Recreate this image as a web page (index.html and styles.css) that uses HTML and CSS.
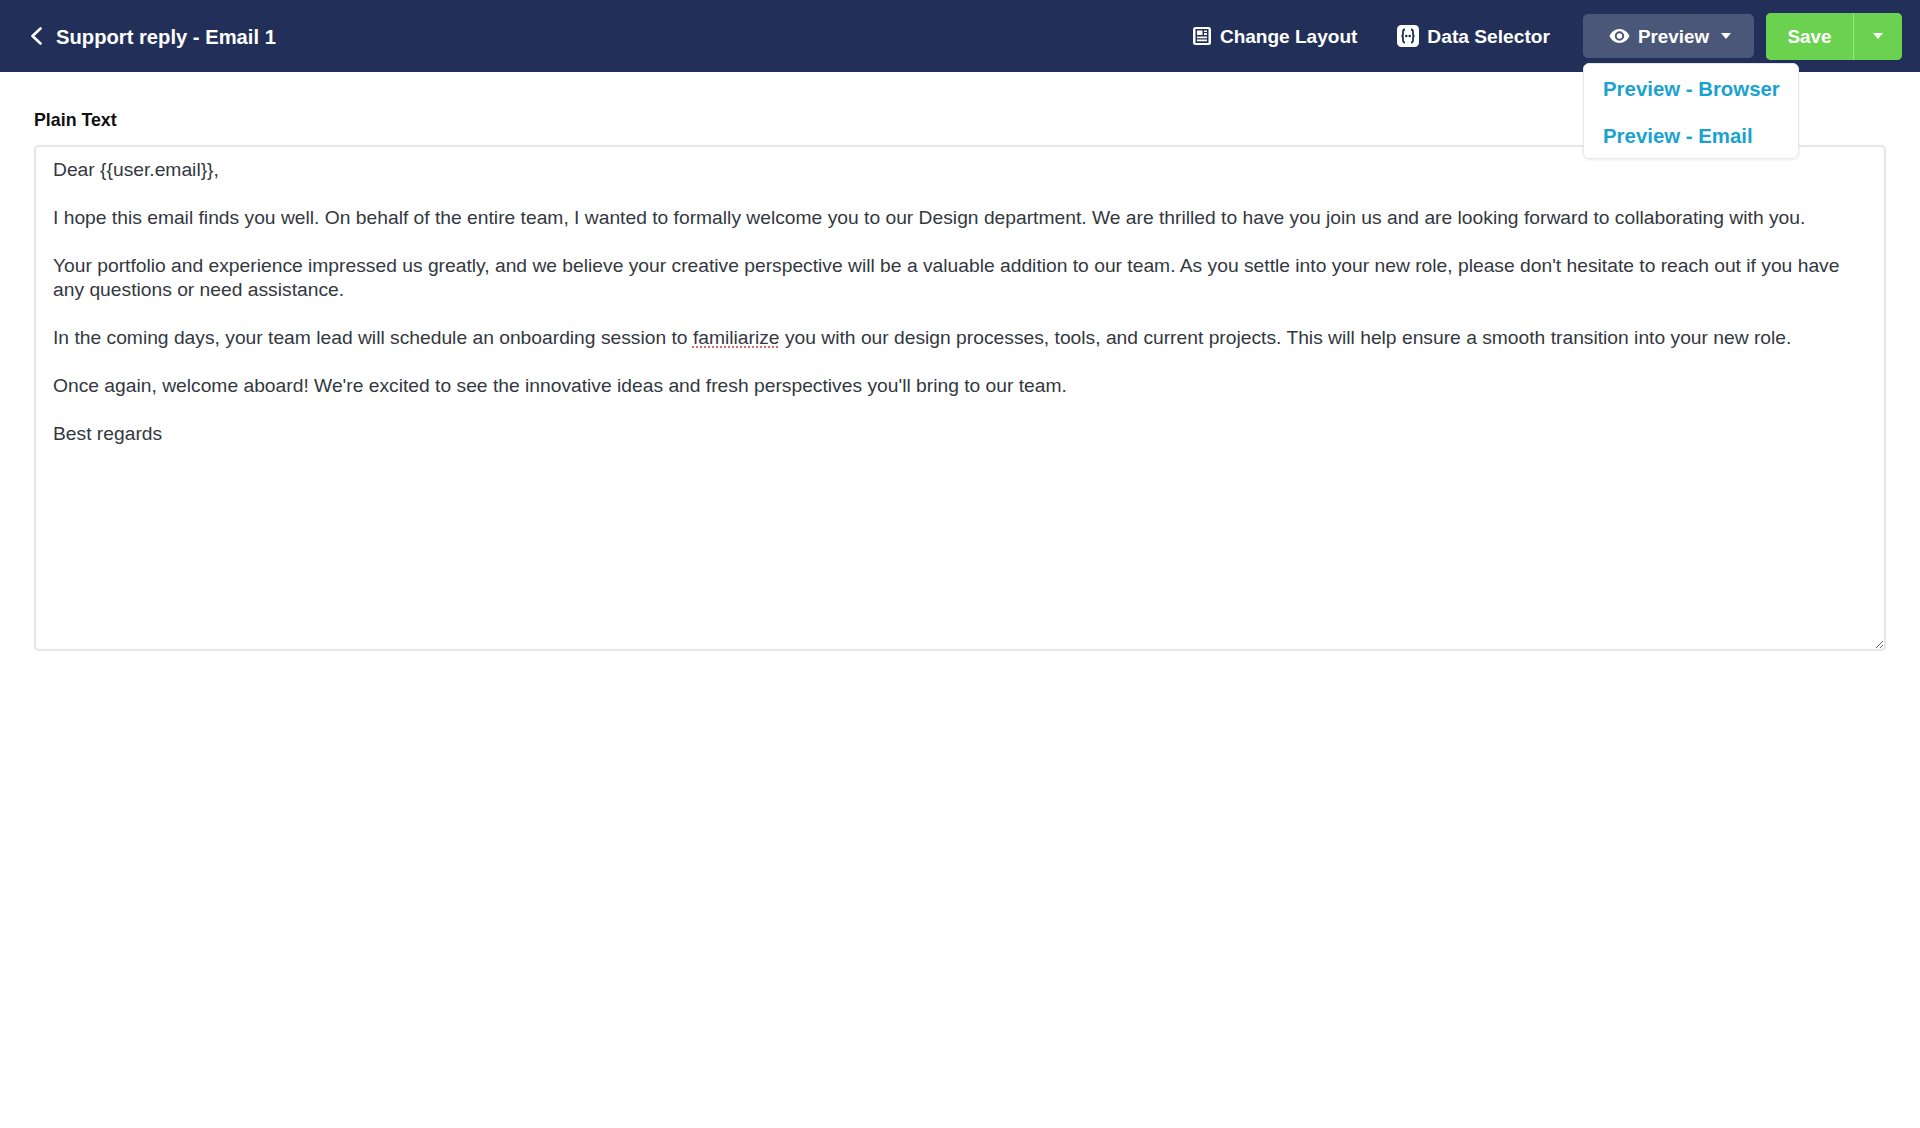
FILE: index.html
```html
<!DOCTYPE html>
<html lang="en">
<head>
<meta charset="UTF-8" />
<meta name="viewport" content="width=device-width, initial-scale=1" />
<title>Support reply - Email 1</title>
<link rel="stylesheet" href="styles.css">
</head>
<body>

<header class="topbar">
  <a class="back-link" href="#">
    <svg class="back-icon" width="12" height="20" viewBox="0 0 12 20"><path d="M10.500 2.500 2.500 10l8 7.500" fill="none" stroke="#fff" stroke-width="2.600" stroke-linecap="round" stroke-linejoin="round"/></svg>
    <span>Support reply - Email 1</span>
  </a>
  <nav class="actions">
    <a class="action-link layout-link" href="#">
      <svg width="18" height="18" viewBox="0 0 18 18"><path fill="#fff" fill-rule="evenodd" d="M2.500 0h13A2.500 2.500 0 0 1 18 2.500v13a2.500 2.500 0 0 1-2.500 2.500h-13A2.500 2.500 0 0 1 0 15.500v-13A2.500 2.500 0 0 1 2.500 0Zm0 2v14h13V2h-13Zm1.500 1.500h5.500v4.500H4V3.500Zm7 0h3V5h-3V3.500ZM11 6h3v2h-3V6ZM4 9.500h10v1.700H4V9.500Zm0 3h10v1.700H4v-1.700Z"/></svg>
      <span>Change Layout</span>
    </a>
    <a class="action-link selector-link" href="#">
      <svg width="22" height="22" viewBox="0 0 22 22"><rect x="0" y="0" width="22" height="22" rx="4.500" fill="#fff"/><path d="M8 4.500c-2 0-2 1-2 2.500v2c0 1-.6 2-1.600 2 1 0 1.600 1 1.600 2v2c0 1.500 0 2.500 2 2.500M14 4.500c2 0 2 1 2 2.500v2c0 1 .6 2 1.600 2-1 0-1.600 1-1.600 2v2c0 1.500 0 2.500-2 2.500" fill="none" stroke="#223059" stroke-width="1.800"/><circle cx="9.300" cy="11" r="1.300" fill="#223059"/><circle cx="12.700" cy="11" r="1.300" fill="#223059"/></svg>
      <span>Data Selector</span>
    </a>
    <div class="preview-wrap">
      <button class="preview-btn" type="button">
        <svg width="21" height="14" viewBox="0 0 20 14"><path fill="#fff" fill-rule="evenodd" d="M10 0c4.500 0 8.200 2.900 10 7-1.800 4.100-5.500 7-10 7S1.800 11.100 0 7c1.800-4.100 5.500-7 10-7Zm0 2.300a4.700 4.700 0 1 0 0 9.400 4.700 4.700 0 0 0 0-9.400Zm0 2a2.700 2.700 0 1 1 0 5.400 2.700 2.700 0 0 1 0-5.400Z"/></svg>
        <span>Preview</span>
        <i class="caret"></i>
      </button>
      <ul class="preview-menu">
        <li><a href="#">Preview - Browser</a></li>
        <li><a href="#">Preview - Email</a></li>
      </ul>
    </div>
    <div class="save-group">
      <button class="save-btn" type="button"><span>Save</span></button>
      <button class="save-more" type="button" aria-label="More save options"><i class="caret"></i></button>
    </div>
  </nav>
</header>

<main class="content">
  <label class="field-label">Plain Text</label>
  <div class="plain-text">
    <p>Dear {{user.email}},</p>
    <p>I hope this email finds you well. On behalf of the entire team, I wanted to formally welcome you to our Design department. We are thrilled to have you join us and are looking forward to collaborating with you.</p>
    <p>Your portfolio and experience impressed us greatly, and we believe your creative perspective will be a valuable addition to our team. As you settle into your new role, please don't hesitate to reach out if you have any questions or need assistance.</p>
    <p>In the coming days, your team lead will schedule an onboarding session to <span class="misspelled">familiarize</span> you with our design processes, tools, and current projects. This will help ensure a smooth transition into your new role.</p>
    <p>Once again, welcome aboard! We're excited to see the innovative ideas and fresh perspectives you'll bring to our team.</p>
    <p>Best regards</p>
  </div>
</main>

</body>
</html>
```

FILE: styles.css
```css
* {
  box-sizing: border-box;
}
body {
  font-family: "Liberation Sans", Arial, sans-serif;
  background: #fff;
  margin: 0;
  color: #33383f;
}
a {
  text-decoration: none;
}
.topbar {
  height: 72px;
  background: #223059;
  display: flex;
  align-items: center;
  justify-content: space-between;
  padding: 0 18px 0 30px;
}
.back-link, .action-link {
  display: flex;
  align-items: center;
  color: #fff;
  font-size: 19.050px;
  font-weight: 700;
}
.back-link span, .action-link span, .preview-btn span, .save-btn span {
  display: block;
  padding-top: 2px;
}
.back-link {
  gap: 14px;
  font-size: 20.200px;
}
.actions {
  display: flex;
  align-items: center;
}
.action-link {
  gap: 9px;
}
.layout-link {
  margin-right: 40px;
}
.selector-link {
  gap: 8px;
  font-size: 19.200px;
  margin-right: 33px;
}
.preview-wrap {
  position: relative;
  margin-right: 12px;
}
.preview-btn {
  width: 171px;
  height: 44px;
  display: flex;
  align-items: center;
  gap: 8px;
  padding: 0 0 0 26px;
  background: #4b5779;
  color: #fff;
  border: none;
  border-radius: 5px;
  font: 700 18.800px "Liberation Sans", Arial, sans-serif;
}
.caret {
  display: block;
  width: 0;
  height: 0;
  border-left: 5.500px solid transparent;
  border-right: 5.500px solid transparent;
  border-top: 6px solid #fff;
  margin-left: 4px;
}
.preview-menu {
  position: absolute;
  top: 49px;
  left: 0;
  width: 216px;
  height: 96px;
  list-style: none;
  margin: 0;
  padding: 2px 19px 0;
  background: #fff;
  border: 1px solid #e6e8ec;
  border-radius: 6px;
  box-shadow: 0 1px 3px rgba(0,0,0,0.08);
  z-index: 5;
}
.preview-menu li {
  height: 47px;
  line-height: 47px;
  white-space: nowrap;
}
.preview-menu a {
  color: #1ba3cf;
  font-size: 20.400px;
  font-weight: 700;
}
.save-group {
  display: flex;
  height: 47px;
  border-radius: 5px;
  overflow: hidden;
  background: #6bd24f;
}
.save-btn, .save-more {
  border: none;
  background: #6bd24f;
  color: #fff;
  font: 700 18.800px "Liberation Sans", Arial, sans-serif;
}
.save-btn {
  width: 87px;
  padding: 0;
}
.save-more {
  width: 49px;
  display: flex;
  align-items: center;
  justify-content: center;
  border-left: 1px solid #9be386;
}
.save-more .caret {
  margin: 0;
}
.content {
  padding: 36px 34px 0;
}
.field-label {
  display: block;
  font-size: 17.800px;
  font-weight: 700;
  line-height: 24px;
  color: #111;
  margin-bottom: 13px;
}
.plain-text {
  height: 506px;
  overflow: auto;
  resize: vertical;
  border: 2px solid #e4e6ea;
  border-radius: 5px;
  padding: 11px 17px;
  font-size: 19.250px;
  line-height: 24px;
}
.plain-text p {
  margin: 0 0 24px;
}
.misspelled {
  text-decoration: underline dotted #e2606a;
  text-underline-offset: 3px;
}
```
